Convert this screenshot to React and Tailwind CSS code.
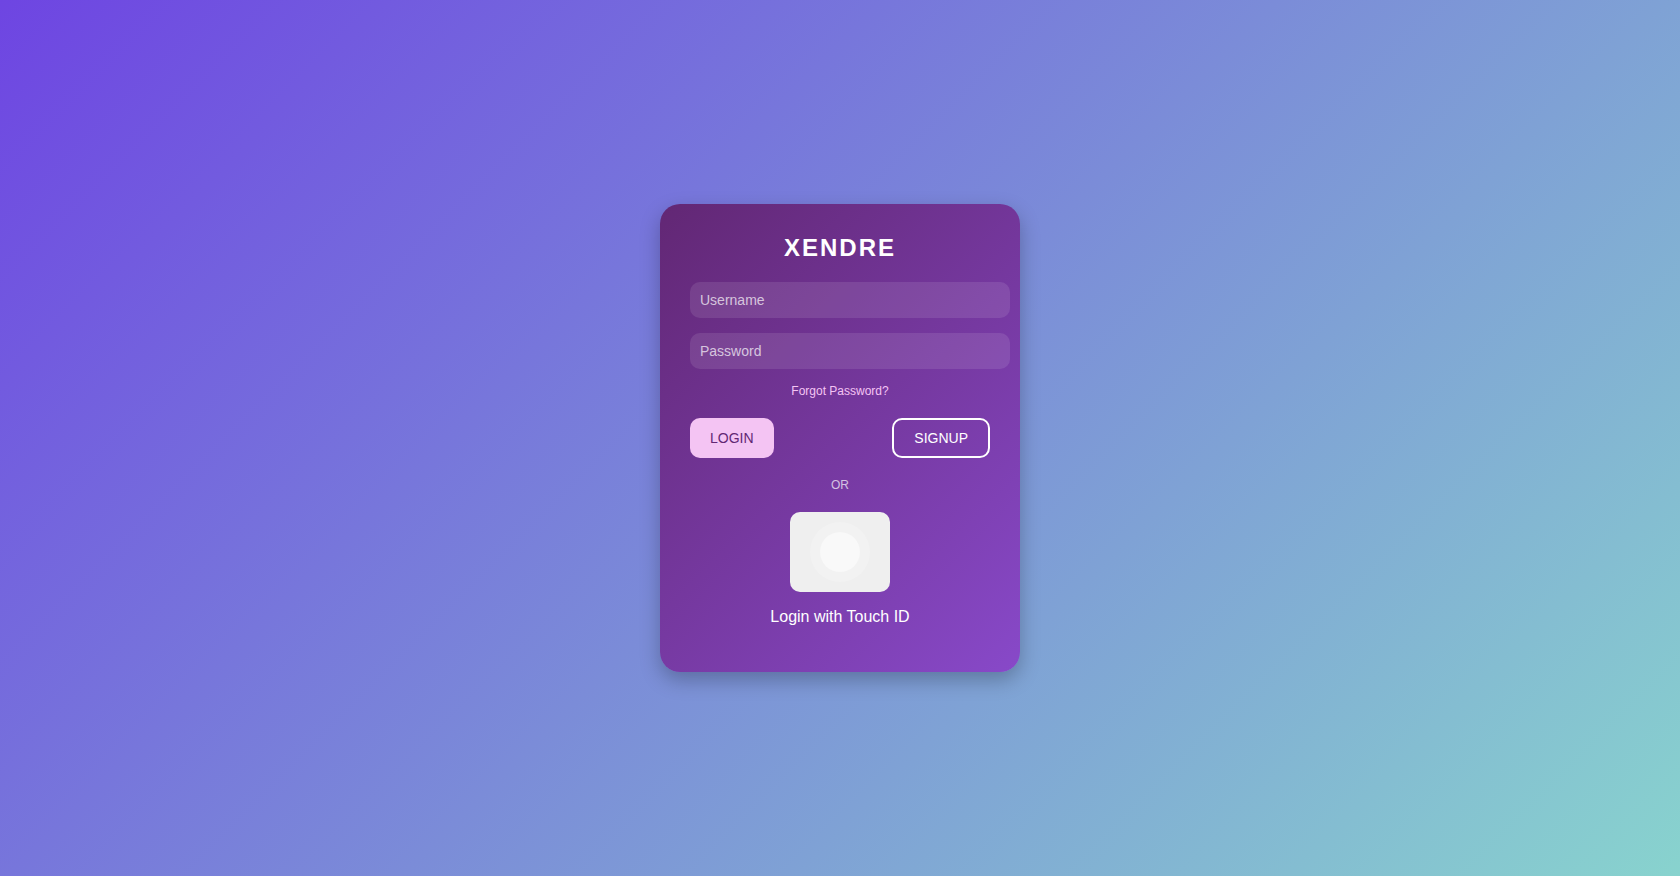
import React from "react";

const Field = ({ label, type }) => {
  return (
    <input
      type={type}
      aria-label={label}
      placeholder={label}
      className="mb-[15px] block h-9 w-80 rounded-[10px] bg-white/10 px-2.5 text-sm text-white outline-none placeholder:text-white/70"
    />
  );
};

const App = () => {
  return (
    <div className="flex min-h-screen items-center justify-center bg-[linear-gradient(135deg,#6e45e2,#88d3ce)] font-['Liberation_Sans',Arial,sans-serif]">
      <div className="w-[360px] rounded-[20px] bg-[linear-gradient(135deg,#622774,#8849c9)] p-[30px] text-center shadow-[0_8px_20px_rgba(0,0,0,0.25)]">
        <h1 className="mb-5 text-2xl leading-7 font-bold tracking-[2px] text-white">XENDRE</h1>

        <form onSubmit={(e) => e.preventDefault()}>
          <Field label="Username" type="text" />
          <Field label="Password" type="password" />

          <a href="#forgot" className="mb-5 block text-xs leading-[14px] text-[#f4c4f3]">
            Forgot Password?
          </a>

          <div className="flex justify-between">
            <button type="submit" className="h-10 rounded-[10px] bg-[#f4c4f3] px-5 text-sm text-[#622774]">
              LOGIN
            </button>
            <button type="button" className="h-10 rounded-[10px] border-2 border-white px-5 text-sm text-white">
              SIGNUP
            </button>
          </div>
        </form>

        <p className="my-5 text-xs leading-[14px] text-white/70">OR</p>

        <button
          type="button"
          aria-labelledby="touch-id"
          className="mx-auto flex h-20 w-[100px] items-center justify-center rounded-[10px] bg-[#efefef]"
        >
          <span className="flex size-[60px] items-center justify-center rounded-full bg-white/20">
            <span className="size-10 rounded-full bg-white/50"></span>
          </span>
        </button>
        <p id="touch-id" className="my-4 text-base leading-[18px] text-white">Login with Touch ID</p>
      </div>
    </div>
  );
};

export default App;
